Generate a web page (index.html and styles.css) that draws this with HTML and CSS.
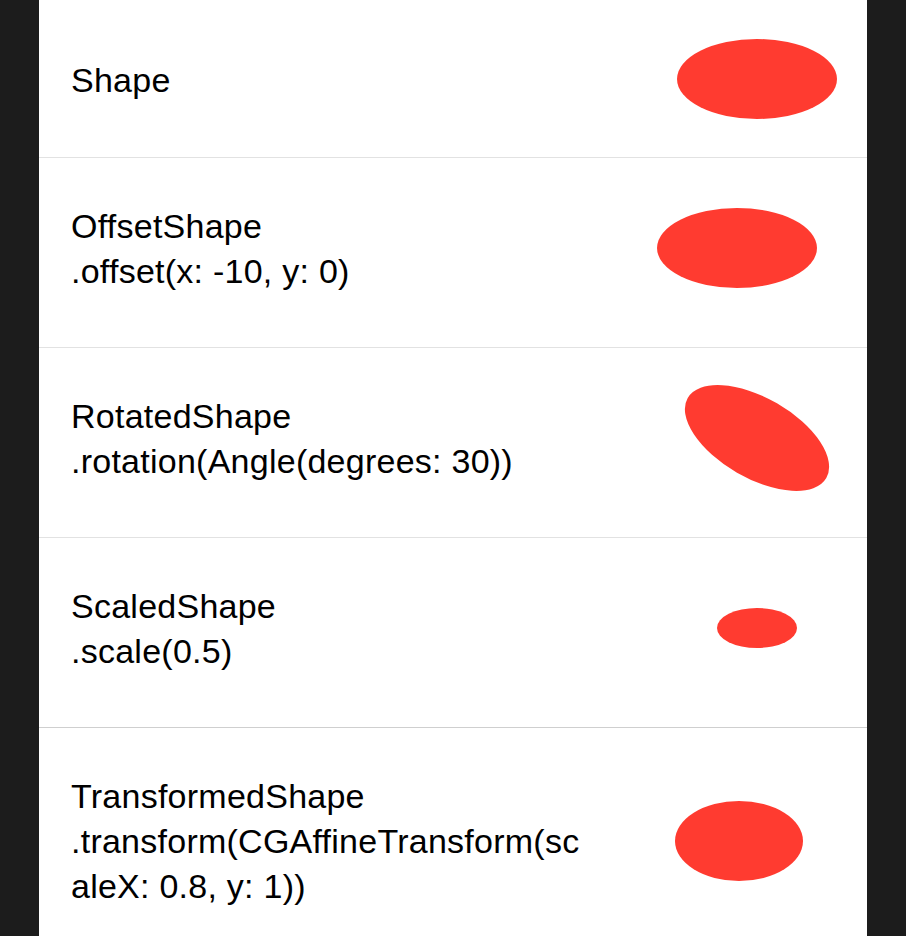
FILE: index.html
```html
<!DOCTYPE html>
<html lang="en">
<head>
<meta charset="utf-8">
<title>Shapes</title>
<link rel="stylesheet" href="styles.css">
</head>
<body>
<main class="panel">
  <section class="row row-first">
    <div class="label"><div>Shape</div></div>
    <div class="shape-box"><div class="ellipse"></div></div>
  </section>
  <section class="row">
    <div class="label"><div>OffsetShape</div><div>.offset(x: -10, y: 0)</div></div>
    <div class="shape-box"><div class="ellipse ellipse-offset"></div></div>
  </section>
  <section class="row">
    <div class="label"><div>RotatedShape</div><div>.rotation(Angle(degrees: 30))</div></div>
    <div class="shape-box"><div class="ellipse ellipse-rotated"></div></div>
  </section>
  <section class="row row-dark-sep">
    <div class="label"><div>ScaledShape</div><div>.scale(0.5)</div></div>
    <div class="shape-box"><div class="ellipse ellipse-scaled"></div></div>
  </section>
  <section class="row row-last">
    <div class="label"><div>TransformedShape</div><div>.transform(CGAffineTransform(sc</div><div>aleX: 0.8, y: 1))</div></div>
    <div class="shape-box"><div class="ellipse ellipse-transformed"></div></div>
  </section>
</main>
</body>
</html>
```

FILE: styles.css
```css
html, body {
  margin: 0;
  padding: 0;
  height: 100%;
}

body {
  background: #1c1c1c;
  overflow: hidden;
  font-family: "Liberation Sans", Arial, sans-serif;
  color: #000;
}

.panel {
  margin: 0 39px;
  background: #fff;
  min-height: 100%;
}

.row {
  display: flex;
  align-items: center;
  justify-content: space-between;
  padding: 45px 30px 54px 32px;
  border-bottom: 1px solid #e2e2e2;
}

.row-first {
  padding-top: 39px;
  padding-bottom: 38px;
}

.row-dark-sep {
  border-bottom-color: #cfcfcf;
}

.row-last {
  border-bottom: none;
}

.label {
  font-size: 34px;
  line-height: 45px;
  letter-spacing: 0.25px;
  white-space: nowrap;
  padding-top: 1px;
  margin-bottom: -1px;
}

.shape-box {
  width: 160px;
  height: 80px;
  flex: none;
}

.ellipse {
  width: 160px;
  height: 80px;
  border-radius: 50%;
  background: #ff3b30;
}

.ellipse-offset {
  transform: translateX(-20px);
}

.ellipse-rotated {
  transform: rotate(30deg);
}

.ellipse-scaled {
  transform: scale(0.5);
}

.ellipse-transformed {
  transform-origin: 0 50%;
  transform: translateX(-2px) scaleX(0.8);
}
```
